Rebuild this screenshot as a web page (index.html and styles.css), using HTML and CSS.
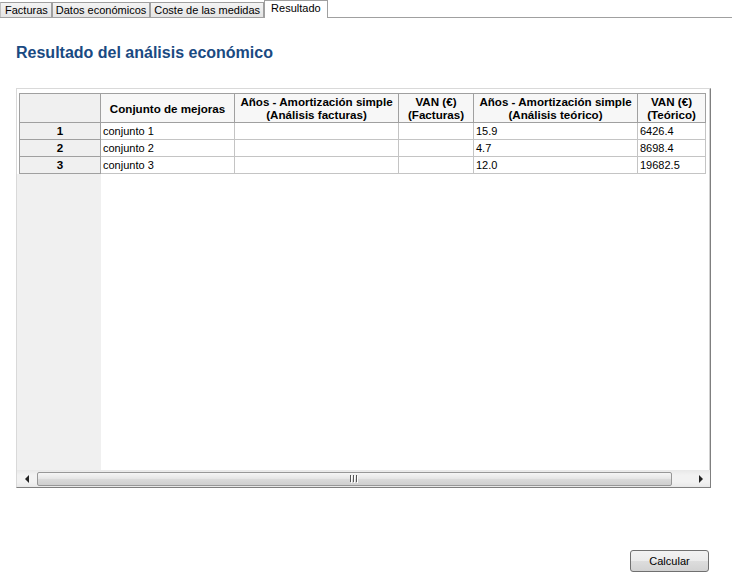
FILE: index.html
```html
<!DOCTYPE html>
<html lang="es">
<head>
<meta charset="utf-8">
<title>Resultado</title>
<link rel="stylesheet" href="styles.css">
</head>
<body>
<div class="tabbar">
  <div class="tab">Facturas</div>
  <div class="tab">Datos económicos</div>
  <div class="tab">Coste de las medidas</div>
  <div class="tab tab-active">Resultado</div>
</div>
<main class="content">
  <h1 class="title">Resultado del análisis económico</h1>
  <div class="frame">
    <div class="viewport">
      <table class="grid">
        <colgroup>
          <col class="c-rh"><col class="c-set"><col class="c-years"><col class="c-van"><col class="c-years"><col class="c-van2">
        </colgroup>
        <thead>
          <tr>
            <th class="corner"></th>
            <th>Conjunto de mejoras</th>
            <th>Años - Amortización simple<br>(Análisis facturas)</th>
            <th>VAN (€)<br>(Facturas)</th>
            <th>Años - Amortización simple<br>(Análisis teórico)</th>
            <th>VAN (€)<br>(Teórico)</th>
          </tr>
        </thead>
        <tbody>
          <tr><td class="rh">1</td><td>conjunto 1</td><td></td><td></td><td>15.9</td><td>6426.4</td></tr>
          <tr><td class="rh">2</td><td>conjunto 2</td><td></td><td></td><td>4.7</td><td>8698.4</td></tr>
          <tr><td class="rh">3</td><td>conjunto 3</td><td></td><td></td><td>12.0</td><td>19682.5</td></tr>
        </tbody>
      </table>
      <div class="filler"><div class="filler-rowhead"></div></div>
    </div>
    <div class="hscroll">
      <div class="sb-btn sb-left">
        <svg width="6" height="8" viewBox="0 0 6 8"><path d="M5 0 L1 4 L5 8 Z" fill="#222"/></svg>
      </div>
      <div class="sb-track">
        <div class="sb-thumb">
          <svg width="9" height="8" viewBox="0 0 9 8"><path d="M0.5 0 V7 M3.5 0 V7 M6.5 0 V7" stroke="#555" stroke-width="1"/><path d="M1.5 1 V8 M4.5 1 V8 M7.5 1 V8" stroke="#fff" stroke-width="1"/></svg>
        </div>
      </div>
      <div class="sb-btn sb-right">
        <svg width="6" height="8" viewBox="0 0 6 8"><path d="M1 0 L5 4 L1 8 Z" fill="#222"/></svg>
      </div>
    </div>
  </div>
  <div class="actions"><button class="btn" type="button">Calcular</button></div>
</main>
</body>
</html>
```

FILE: styles.css
```css
html, body {
  margin: 0;
  padding: 0;
  background: #ffffff;
}

body {
  width: 732px;
  height: 587px;
  overflow: hidden;
  font-family: "Liberation Sans", Arial, sans-serif;
  font-size: 11px;
  color: #000;
}

/* Tabs */
.tabbar {
  display: flex;
  align-items: flex-end;
  height: 17px;
  border-bottom: 1px solid #a0a0a0;
}

.tab {
  height: 14px;
  line-height: 15px;
  padding: 0 3px;
  border: 1px solid #a0a0a0;
  border-bottom: none;
  background: linear-gradient(#f4f4f4, #e4e4e4);
  white-space: nowrap;
}

.tab:first-child {
  padding-left: 4px;
  border-left-color: #c0c0c0;
}

.tab-active {
  height: 17px;
  line-height: 14px;
  padding: 0 6px 0 6px;
  margin-bottom: -1px;
  background: #ffffff;
}

/* Content */
.content {
  padding: 0 21px 0 16px;
}

.title {
  margin: 25px 0 0;
  font-size: 16px;
  line-height: 19px;
  font-weight: bold;
  color: #1a4a82;
}

.frame {
  margin-top: 26px;
  height: 400px;
  box-sizing: border-box;
  border: 1px solid;
  border-color: #d9d9d9 #7f7f7f #7f7f7f #d9d9d9;
  display: flex;
  flex-direction: column;
}

.viewport {
  flex: 1;
  display: flex;
  flex-direction: column;
  padding: 4px 2px 0 2px;
  border-right: 1px solid #d0d0d0;
  min-height: 0;
}

/* Grid table */
.grid {
  border-collapse: collapse;
  table-layout: fixed;
  width: 686px;
}

.c-rh { width: 81px; }
.c-set { width: 134px; }
.c-years { width: 164px; }
.c-van { width: 75px; }
.c-van2 { width: 68px; }

.grid th {
  height: 28px;
  padding: 0 2px;
  border: 1px solid #a0a0a0;
  background: #f7f7f7;
  font-size: 11.6px;
  font-weight: bold;
  line-height: 13px;
  text-align: center;
  vertical-align: middle;
  white-space: nowrap;
}

.grid th.corner {
  background: #f0f0f0;
}

.grid td {
  height: 16px;
  padding: 0 2px;
  border: 1px solid #c4c4c4;
  line-height: 16px;
  white-space: nowrap;
  overflow: hidden;
}

.grid td.rh {
  background: #f0f0f0;
  border-color: #a0a0a0;
  font-size: 11.6px;
  font-weight: bold;
  text-align: center;
}

.filler {
  flex: 1;
  display: flex;
  margin-left: -2px;
}

.filler-rowhead {
  width: 84px;
  background: #f0f0f0;
}

/* Horizontal scrollbar */
.hscroll {
  height: 17px;
  display: flex;
  background: linear-gradient(#e8e8e8, #f2f2f2 30%, #f2f2f2 70%, #e8e8e8);
}

.sb-btn {
  display: flex;
  align-items: center;
  justify-content: center;
}

.sb-left { width: 20px; }
.sb-right { width: 18px; }

.sb-track {
  flex: 1;
  display: flex;
  align-items: center;
}

.sb-thumb {
  width: 635px;
  height: 14px;
  box-sizing: border-box;
  border: 1px solid #979797;
  border-radius: 2px;
  background: linear-gradient(#f5f5f5, #e7e7e7 45%, #d9d9d9 55%, #cfcfcf);
  display: flex;
  align-items: center;
  justify-content: center;
}

/* Button */
.actions {
  display: flex;
  justify-content: flex-end;
  margin-top: 62px;
  padding-right: 2px;
}

.btn {
  width: 79px;
  height: 22px;
  padding: 0;
  border: 1px solid #707070;
  border-radius: 3px;
  background: linear-gradient(#f2f2f2, #ebebeb 50%, #dddddd 51%, #d2d2d2);
  font-family: "Liberation Sans", Arial, sans-serif;
  font-size: 11px;
  color: #000;
}
```
